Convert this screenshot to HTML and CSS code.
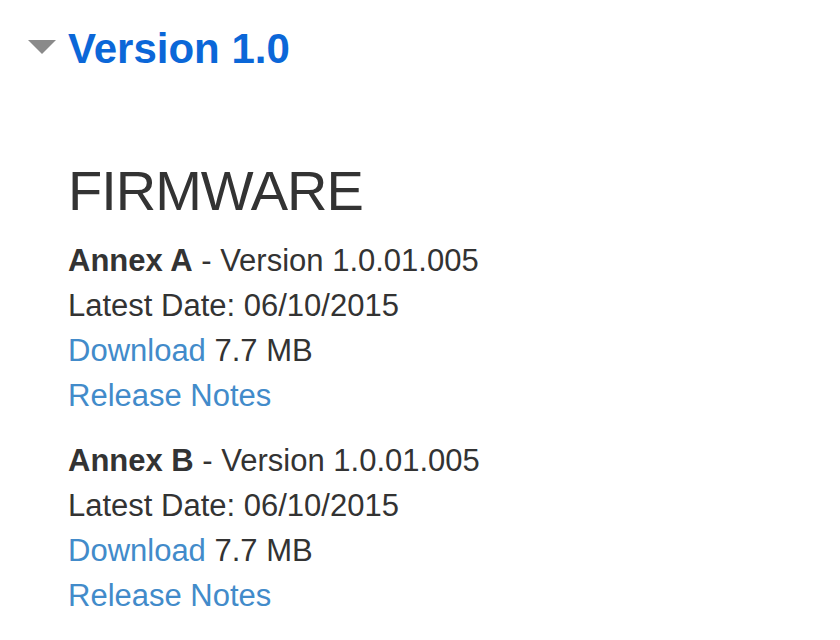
FILE: index.html
```html
<!DOCTYPE html>
<html>
<head>
<meta charset="utf-8">
<link rel="stylesheet" href="styles.css">
</head>
<body>
<div class="panel">
  <div class="panel-head">
    <span class="caret"></span>
    <h1 class="version">Version 1.0</h1>
  </div>
  <div class="panel-body">
    <h2 class="section-title">FIRMWARE</h2>
    <div class="item">
      <p class="line"><strong>Annex A</strong> - Version 1.0.01.005</p>
      <p class="line">Latest Date: 06/10/2015</p>
      <p class="line"><a class="link" href="#">Download</a> 7.7 MB</p>
      <p class="line"><a class="link" href="#">Release Notes</a></p>
    </div>
    <div class="item">
      <p class="line"><strong>Annex B</strong> - Version 1.0.01.005</p>
      <p class="line">Latest Date: 06/10/2015</p>
      <p class="line"><a class="link" href="#">Download</a> 7.7 MB</p>
      <p class="line"><a class="link" href="#">Release Notes</a></p>
    </div>
  </div>
</div>
</body>
</html>
```
FILE: styles.css
```css
html, body {
  margin: 0;
  padding: 0;
  background: #ffffff;
}
body {
  font-family: "Liberation Sans", Arial, sans-serif;
  color: #333333;
  font-size: 31px;
  line-height: 45px;
}
.panel {
  padding: 26px 0 0 28px;
}
.panel-head {
  display: flex;
  align-items: center;
  gap: 12px;
  height: 46px;
}
.caret {
  width: 0;
  height: 0;
  border-left: 14px solid transparent;
  border-right: 14px solid transparent;
  border-top: 14px solid #8a8a8a;
  margin-top: -4px;
}
.version {
  margin: 0;
  font-size: 42px;
  line-height: 46px;
  font-weight: 700;
  color: #0b67d8;
}
.panel-body {
  padding: 87px 0 0 40px;
}
.section-title {
  margin: 0 0 15px 0;
  font-size: 56px;
  line-height: 64px;
  letter-spacing: -1px;
  font-weight: 400;
  color: #333333;
}
.item {
  margin-bottom: 20px;
}
.line {
  margin: 0;
}
.link {
  color: #428bca;
  text-decoration: none;
}
strong {
  font-weight: 700;
}
```
